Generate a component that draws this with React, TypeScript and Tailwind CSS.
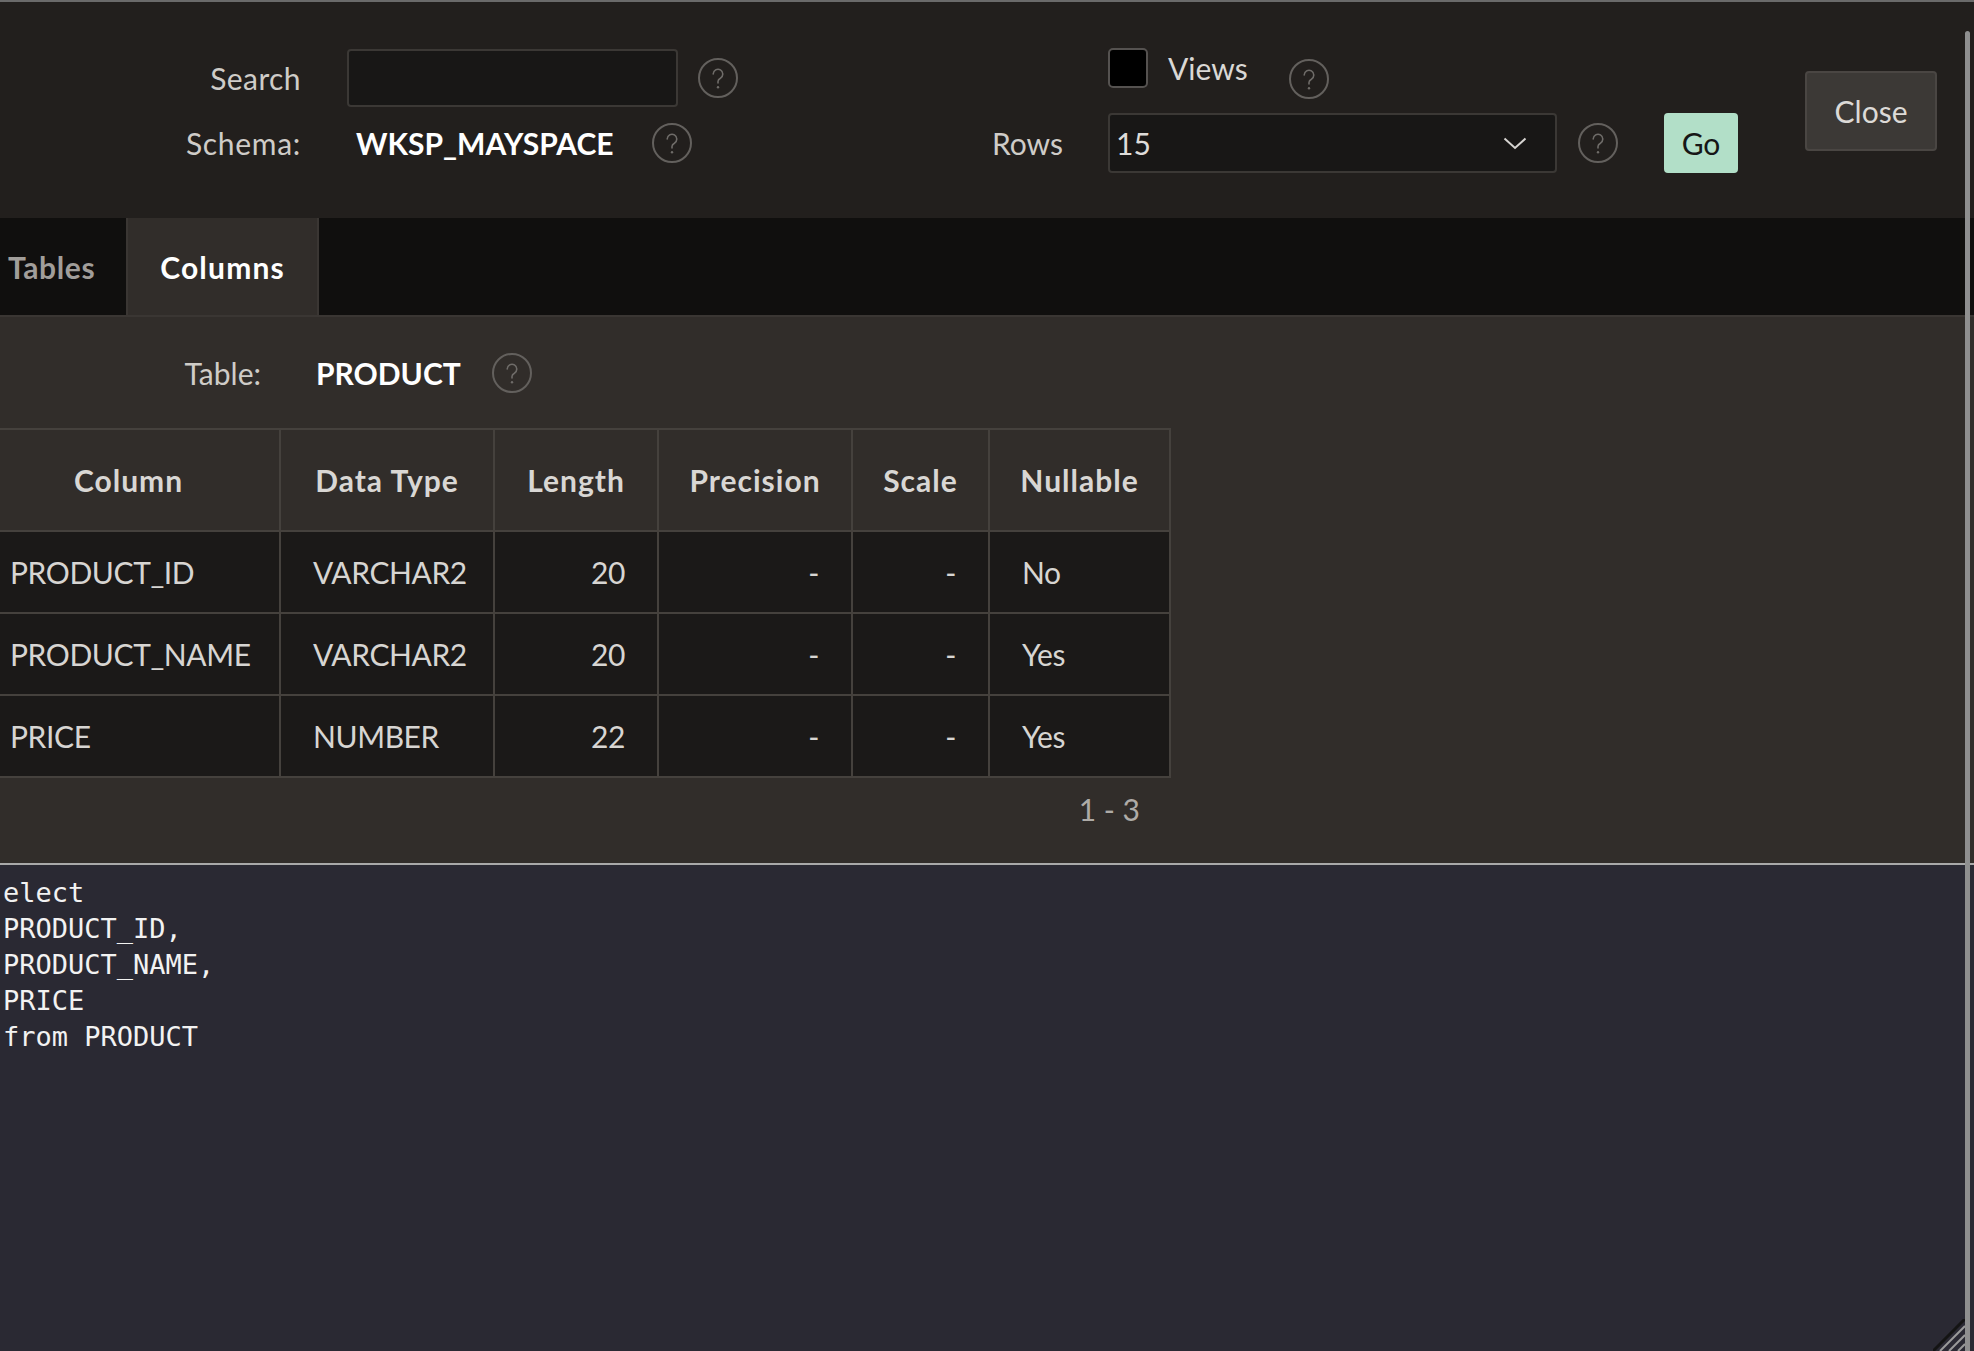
import React from "react";

const Help = ({ className = "" }: { className?: string }) => (
  <svg width="40" height="40" viewBox="0 0 40 40" className={className}>
    <circle cx="20" cy="20" r="19" fill="none" stroke="#63605d" strokeWidth="2" />
    <path
      d="M15.2 16a4.8 4.8 0 1 1 7.2 4.2c-1.5.8-2.4 1.7-2.4 3.4V25"
      fill="none"
      stroke="#6f6c69"
      strokeWidth="1.6"
      strokeLinecap="round"
    />
    <circle cx="20" cy="29.3" r="1.2" fill="#6f6c69" />
  </svg>
);

const rows = [
  ["PRODUCT_ID", "VARCHAR2", "20", "-", "-", "No"],
  ["PRODUCT_NAME", "VARCHAR2", "20", "-", "-", "Yes"],
  ["PRICE", "NUMBER", "22", "-", "-", "Yes"],
];

export default function App() {
  return (
    <div className="relative w-[1974px] h-[1351px] overflow-hidden bg-[#2a2933] font-['Lato',sans-serif] text-[30px]">
      {/* top line */}
      <div className="h-[2px] bg-[#6a6a6a]" />

      {/* header */}
      <div className="flex items-start h-[216px] bg-[#221f1d] pt-[47px]">
        {/* left block */}
        <div className="w-[992px] flex flex-col">
          <div className="flex items-center h-[58px]">
            <div className="w-[301px] text-right text-[#cfccc8] leading-none tracking-[0.4px]">Search</div>
            <div className="ml-[46px] w-[331px] h-[58px] rounded-[4px] border-2 border-[#3b3835] bg-[#181716]" />
            <Help className="ml-[20px]" />
          </div>
          <div className="flex items-center h-[40px] mt-[16px]">
            <div className="w-[301px] text-right text-[#cfccc8] leading-none tracking-[0.7px]">Schema:</div>
            <div className="ml-[55px] w-[258px] font-bold text-white leading-none">WKSP_MAYSPACE</div>
            <Help className="ml-[38px]" />
          </div>
        </div>

        {/* middle block */}
        <div className="flex flex-col">
          <div className="flex items-start h-[50px]">
            <div className="ml-[116px] mt-[-1px] w-[40px] h-[40px] rounded-[5px] border-2 border-[#555250] bg-black" />
            <div className="ml-[20px] h-[40px] mt-[-1px] leading-[40px] text-[#dad8d5]">Views</div>
            <Help className="ml-[41px] mt-[10px]" />
          </div>
          <div className="flex items-center mt-[14px] h-[60px]">
            <div className="w-[70px] text-[#cfccc8] leading-none">Rows</div>
            <div className="ml-[46px] w-[449px] h-[60px] rounded-[4px] border-2 border-[#3b3835] bg-[#181716] flex items-center justify-between pl-[6px] pr-[28px]">
              <span className="text-[#dedcd9] leading-none">15</span>
              <svg width="24" height="13" viewBox="0 0 24 13">
                <polyline points="1.5,1.5 12,11 22.5,1.5" fill="none" stroke="#d6d4d1" strokeWidth="2" />
              </svg>
            </div>
            <Help className="ml-[21px]" />
            <div className="ml-[46px] w-[74px] h-[60px] rounded-[4px] bg-[#b2dfc8] text-[#161616] flex items-center justify-center leading-none">
              Go
            </div>
          </div>
        </div>

        {/* close */}
        <div className="ml-[67px] mt-[22px] w-[132px] h-[80px] rounded-[4px] border-2 border-[#4a4643] bg-[#3c3936] text-[#dcdad7] flex items-center justify-center leading-none">
          Close
        </div>
      </div>

      {/* tab bar */}
      <div className="flex h-[99px] bg-[#100f0e] border-b-2 border-[#3a3633]">
        <div className="ml-[-24px] pl-[32px] pr-[31px] flex items-center font-bold text-[#a19e9a] border-r-2 border-[#3a3633] leading-none tracking-[0.6px]">
          Tables
        </div>
        <div className="pl-[32px] pr-[32px] flex items-center font-bold text-white bg-[#312d2a] border-r-2 border-[#3a3633] leading-none tracking-[1.2px]">
          Columns
        </div>
      </div>

      {/* content */}
      <div className="h-[546px] bg-[#312d2a] pt-[36px]">
        <div className="flex items-center h-[40px]">
          <div className="w-[261px] text-right text-[#cfccc8] leading-none">Table:</div>
          <div className="ml-[55px] font-bold text-white leading-none">PRODUCT</div>
          <Help className="ml-[31px]" />
        </div>

        <table className="mt-[35px] ml-[-24px] w-[1193px] table-fixed border-collapse">
          <colgroup>
            <col className="w-[303px]" />
            <col className="w-[214px]" />
            <col className="w-[164px]" />
            <col className="w-[194px]" />
            <col className="w-[137px]" />
            <col className="w-[181px]" />
          </colgroup>
          <thead>
            <tr className="h-[102px]">
              {["Column", "Data Type", "Length", "Precision", "Scale", "Nullable"].map((h) => (
                <th
                  key={h}
                  className="border-2 border-[#45413d] bg-[#312d2a] text-center font-bold text-[#d9d7d4] leading-none tracking-[1px]"
                >
                  {h}
                </th>
              ))}
            </tr>
          </thead>
          <tbody>
            {rows.map((r) => (
              <tr key={r[0]} className="h-[82px] bg-[#1b1918] text-[#d7d5d2] tracking-[-0.4px]">
                <td className="border-2 border-[#45413d] pl-[32px] leading-none">{r[0]}</td>
                <td className="border-2 border-[#45413d] pl-[32px] leading-none">{r[1]}</td>
                <td className="border-2 border-[#45413d] pr-[32px] text-right leading-none">{r[2]}</td>
                <td className="border-2 border-[#45413d] pr-[32px] text-right leading-none">{r[3]}</td>
                <td className="border-2 border-[#45413d] pr-[32px] text-right leading-none">{r[4]}</td>
                <td className="border-2 border-[#45413d] pl-[32px] leading-none">{r[5]}</td>
              </tr>
            ))}
          </tbody>
        </table>

        <div className="w-[1140px] mt-[11px] h-[40px] leading-[40px] text-right text-[#aeaba7]">1 - 3</div>
      </div>

      {/* editor */}
      <div className="border-t-2 border-[#a9a9a9] bg-[#2a2933] h-[488px] pt-[10px] pl-[3px] font-['DejaVu_Sans_Mono',monospace] text-[27px] leading-[36px] text-[#f2f2f2] whitespace-pre">
        <div>elect</div>
        <div>PRODUCT_ID,</div>
        <div>PRODUCT_NAME,</div>
        <div>PRICE</div>
        <div>from PRODUCT</div>
      </div>

      {/* scrollbar overlay */}
      <div className="absolute right-[4px] top-[31px] bottom-0 w-[5px] rounded-t-full bg-[#8f8f8f]" />

      {/* resize grip */}
      <svg className="absolute right-[9px] bottom-0" width="32" height="32" viewBox="0 0 32 32">
        <line x1="0" y1="32" x2="32" y2="0" stroke="#141414" strokeWidth="3" />
        <line x1="7" y1="32" x2="32" y2="7" stroke="#9a9a9a" strokeWidth="2" />
        <line x1="16" y1="32" x2="32" y2="16" stroke="#9a9a9a" strokeWidth="2" />
        <line x1="25" y1="32" x2="32" y2="25" stroke="#9a9a9a" strokeWidth="2" />
      </svg>
    </div>
  );
}
